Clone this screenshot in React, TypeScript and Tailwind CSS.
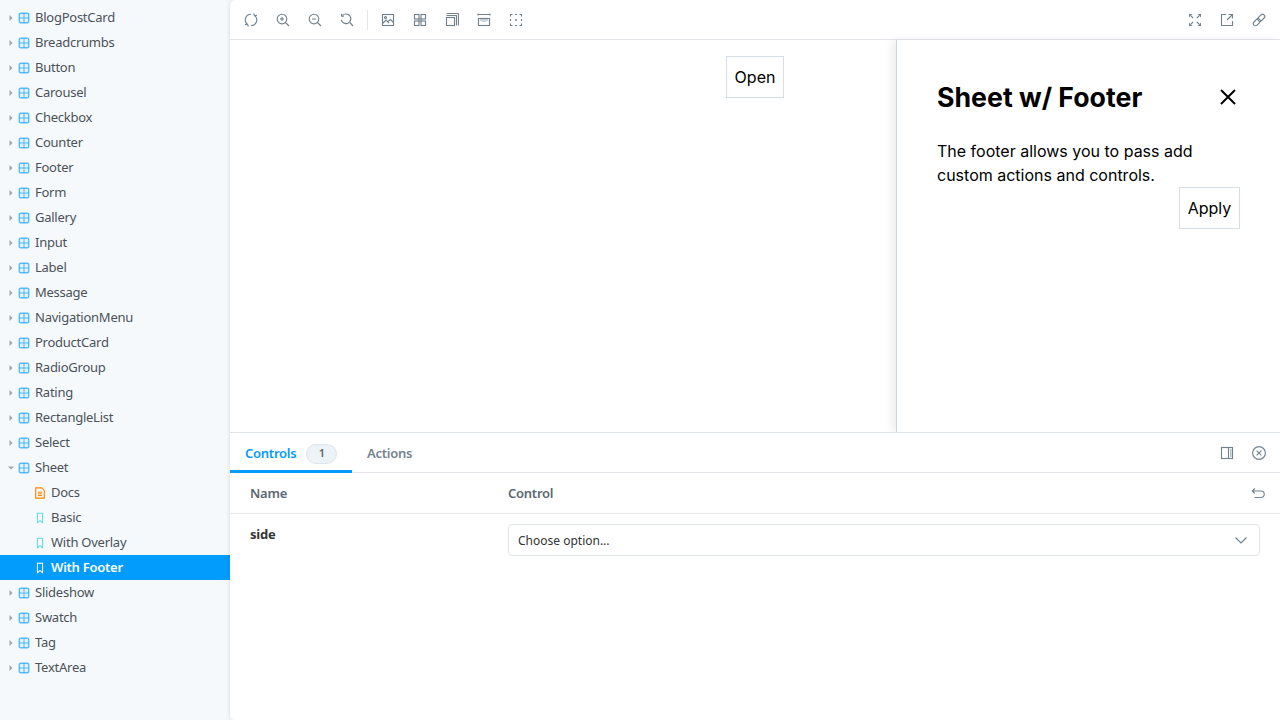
import type { ReactNode } from "react";

const SANS = "font-['Noto_Sans','Open_Sans',sans-serif] tracking-[-0.25px]";

const before = [
  "BlogPostCard", "Breadcrumbs", "Button", "Carousel", "Checkbox", "Counter", "Footer", "Form", "Gallery", "Input",
  "Label", "Message", "NavigationMenu", "ProductCard", "RadioGroup", "Rating", "RectangleList", "Select",
];
const after = ["Slideshow", "Swatch", "Tag", "TextArea"];

function Icon({ children, className = "text-[#73828c]", size = 14 }: { children: ReactNode; className?: string; size?: number }) {
  return (
    <svg width={size} height={size} viewBox="0 0 14 14" fill="none" stroke="currentColor" strokeWidth="1.15" className={`shrink-0 ${className}`}>
      {children}
    </svg>
  );
}

function ComponentIcon() {
  return (
    <Icon size={12} className="text-[#029cfd]">
      <rect x="1.5" y="1.5" width="11" height="11" rx="1.5" strokeWidth="1.6" fill="currentColor" fillOpacity="0.12" opacity="0.65" />
      <path d="M7 1.5v11M1.5 7h11" strokeWidth="1.2" opacity="0.65" />
    </Icon>
  );
}

function Caret({ open }: { open?: boolean }) {
  return (
    <svg width="6" height="6" viewBox="0 0 6 6" className="shrink-0 text-[#9aa5ad]" fill="currentColor">
      {open ? <path d="M0 1.5h6L3 4.5z" /> : <path d="M1.5 0l3 3-3 3z" />}
    </svg>
  );
}

function ComponentRow({ name, open }: { name: string; open?: boolean }) {
  return (
    <div className="flex h-[25px] items-center pl-[8px] text-[13px] text-[#4b5259]">
      <Caret open={open} />
      <span className="ml-[4px]"><ComponentIcon /></span>
      <span className="ml-[5px]">{name}</span>
    </div>
  );
}

function StoryRow({ name, active }: { name: string; active?: boolean }) {
  return (
    <div className={`flex h-[25px] items-center pl-[34px] text-[13px] ${active ? "bg-[#029cfd] font-semibold text-white" : "text-[#4b5259]"}`}>
      <Icon size={12} className={active ? "text-white" : "text-[#5fdcdc]"}>
        <path d="M4 1.5h6v11L7 10l-3 2.5z" strokeWidth="1.2" />
      </Icon>
      <span className="ml-[5px]">{name}</span>
    </div>
  );
}

function ToolButton({ children }: { children: ReactNode }) {
  return <div className="flex h-[40px] w-[32px] items-center justify-center">{children}</div>;
}

function Toolbar() {
  return (
    <div className="flex h-[40px] shrink-0 items-center justify-between border-b border-[#e3e7eb] pl-[5px] pr-[5px]">
      <div className="flex items-center">
        <ToolButton>
          <Icon>
            <path d="M7 1.3A5.7 5.7 0 0 0 3.6 11.6M7 12.7A5.7 5.7 0 0 0 10.4 2.4" />
            <path d="M9.7 0.3l.7 2.4 2.5-.3M4.3 13.7l-.7-2.4-2.5.3" />
          </Icon>
        </ToolButton>
        <ToolButton>
          <Icon>
            <circle cx="6" cy="6" r="4.8" />
            <path d="M9.5 9.5L13 13M6 4v4M4 6h4" />
          </Icon>
        </ToolButton>
        <ToolButton>
          <Icon>
            <circle cx="6" cy="6" r="4.8" />
            <path d="M9.5 9.5L13 13M4 6h4" />
          </Icon>
        </ToolButton>
        <ToolButton>
          <Icon>
            <path d="M2.4 2.6A4.8 4.8 0 1 1 1.3 6.8" />
            <path d="M9.8 9.5L13 13M1.6 0.8v2.4H4" />
          </Icon>
        </ToolButton>
        <div className="mx-[4px] h-[20px] w-px bg-[#e3e7eb]" />
        <ToolButton>
          <Icon>
            <rect x="1.5" y="1.5" width="11" height="11" />
            <path d="M1.5 10.5L5 7l3 3M7 8.5L9.5 6.5l3 3" />
            <circle cx="4.5" cy="4.5" r="1" />
          </Icon>
        </ToolButton>
        <ToolButton>
          <Icon>
            <rect x="1.5" y="1.5" width="4.5" height="4.5" />
            <rect x="8" y="1.5" width="4.5" height="4.5" />
            <rect x="1.5" y="8" width="4.5" height="4.5" />
            <rect x="8" y="8" width="4.5" height="4.5" />
            <rect x="5" y="5" width="4" height="4" fill="currentColor" stroke="none" opacity="0.55" />
          </Icon>
        </ToolButton>
        <ToolButton>
          <Icon>
            <rect x="1.5" y="4.5" width="8" height="8" />
            <path d="M1.5 2.5h10v10M1.5 0.5h12v12" />
          </Icon>
        </ToolButton>
        <ToolButton>
          <Icon>
            <path d="M1 1.5h12M1 0.5v2M13 0.5v2" />
            <rect x="1.5" y="5.5" width="11" height="7" />
            <path d="M4 6v2M6 6v3M8 6v3M10 6v2" opacity="0.6" />
          </Icon>
        </ToolButton>
        <ToolButton>
          <Icon>
            <path d="M1.5 3.5v-2h2M6 1.5h2M10.5 1.5h2v2M12.5 6v2M12.5 10.5v2h-2M8 12.5H6M3.5 12.5h-2v-2M1.5 8V6" />
            <circle cx="7" cy="7" r="1" fill="currentColor" stroke="none" />
          </Icon>
        </ToolButton>
      </div>
      <div className="flex items-center">
        <ToolButton>
          <Icon>
            <path d="M1 1h3.4L1 4.4zM13 1H9.6L13 4.4zM1 13h3.4L1 9.6zM13 13H9.6L13 9.6z" fill="currentColor" stroke="none" />
            <path d="M3 3l2.2 2.2M11 3L8.8 5.2M3 11l2.2-2.2M11 11L8.8 8.8" />
          </Icon>
        </ToolButton>
        <ToolButton>
          <Icon>
            <path d="M6 1.5H1.5v11h11V8M7 7l5.5-5.5M8.5 1.5h4v4" />
          </Icon>
        </ToolButton>
        <ToolButton>
          <Icon>
            <g transform="rotate(-45 7 7)">
              <rect x="-0.2" y="4.8" width="8" height="4.4" rx="2.2" />
              <rect x="6.2" y="4.8" width="8" height="4.4" rx="2.2" />
            </g>
          </Icon>
        </ToolButton>
      </div>
    </div>
  );
}

function Preview() {
  return (
    <div className="relative flex-1 bg-white font-['Inter',sans-serif] tracking-normal text-black">
      <div className="flex justify-center pt-[16px]">
        <button className="h-[42px] border border-[#d5dde5] bg-white px-[8px] text-[16px] leading-[24px]">Open</button>
      </div>
      {/* sheet sits over the story canvas */}
      <div className="absolute inset-y-0 right-0 w-[384px] border-l border-[#c9d6e2] bg-white p-[40px] shadow-[-4px_0_8px_rgba(0,0,0,0.07)]">
        <div className="flex h-[34px] items-center justify-between">
          <h2 className="text-[26.7px] font-bold leading-[34px]">Sheet w/ Footer</h2>
          <svg width="24" height="24" viewBox="0 0 24 24" fill="none" stroke="currentColor" strokeWidth="2">
            <path d="M5 5l14 14M19 5L5 19" />
          </svg>
        </div>
        <p className="mt-[25px] text-[16px] leading-[24px]">The footer allows you to pass add custom actions and controls.</p>
        <div className="flex justify-end">
          <button className="h-[42px] w-[61px] border border-[#d5dde5] bg-white text-[16px] leading-[24px]">Apply</button>
        </div>
      </div>
    </div>
  );
}

function Panel() {
  return (
    <div className={`relative flex h-[288px] shrink-0 flex-col border-t border-[#dfe4e9] bg-white ${SANS}`}>
      <div className="flex h-[40px] shrink-0 items-stretch justify-between border-b border-[#e3e7eb]">
        <div className="flex items-stretch text-[13px] font-semibold">
          <div className="-mb-px flex w-[122px] items-center border-b-[3px] border-[#029cfd] pl-[15px] pt-[4px] text-[#029cfd]">
            Controls
            <span className="ml-[10px] flex h-[20px] w-[31px] items-center justify-center rounded-full border border-[#dfe5ea] bg-[#eef3f7] text-[11px] text-[#5c6870]">1</span>
          </div>
          <div className="flex items-center pl-[15px] pt-[3px] text-[#73828c]">Actions</div>
        </div>
        <div className="flex items-center pr-[5px]">
          <ToolButton>
            <Icon>
              <rect x="1.5" y="1.5" width="11" height="11" />
              <path d="M8.5 1.5v11M10 4h1.5M10 6h1.5M10 8h1.5M10 10h1.5" />
            </Icon>
          </ToolButton>
          <ToolButton>
            <Icon>
              <circle cx="7" cy="7" r="6.4" />
              <path d="M4.6 4.6l4.8 4.8M9.4 4.6l-4.8 4.8" />
            </Icon>
          </ToolButton>
        </div>
      </div>
      <div className="flex h-[41px] shrink-0 items-center border-b border-[#e3e7eb] pl-[20px] pr-[15px] pt-[1px] text-[13px] font-semibold text-[#5c6870]">
        <div className="w-[258px]">Name</div>
        <div className="flex-1">Control</div>
        <Icon>
          <path d="M1.5 4h8.5a2.5 2.5 0 0 1 0 6.5H3.5M3.8 1.5L1.3 4l2.5 2.5" />
        </Icon>
      </div>
      <div className="flex items-start pl-[20px] pr-[20px] pt-[10px] text-[13px]">
        <div className="w-[258px] pt-[1px] font-bold text-[#333]">side</div>
        <div className="flex h-[32px] flex-1 items-center justify-between rounded-[4px] border border-[#dfe4e9] pl-[9px] pr-[11px] text-[12px] tracking-normal text-[#333]">
          <span className="pt-[1px]">Choose option...</span>
          <Icon className="text-[#73828c]">
            <path d="M1.5 4.5L7 10l5.5-5.5" />
          </Icon>
        </div>
      </div>
    </div>
  );
}

export default function App() {
  return (
    <div className={`flex h-[720px] w-[1280px] overflow-hidden bg-[#f6f9fc] ${SANS}`}>
      <aside className="w-[230px] shrink-0 pt-[5px]">
        {before.map((name) => (
          <ComponentRow key={name} name={name} />
        ))}
        <ComponentRow name="Sheet" open />
        <div className="flex h-[25px] items-center pl-[34px] text-[13px] text-[#4b5259]">
          <Icon size={12} className="text-[#ff8300]">
            <path d="M2 1h7l3 3v9H2z" strokeWidth="1.3" />
            <path d="M4.5 6h5M4.5 8h5M4.5 10h5" />
          </Icon>
          <span className="ml-[5px]">Docs</span>
        </div>
        <StoryRow name="Basic" />
        <StoryRow name="With Overlay" />
        <StoryRow name="With Footer" active />
        {after.map((name) => (
          <ComponentRow key={name} name={name} />
        ))}
      </aside>
      <main className="flex flex-1 flex-col overflow-hidden rounded-l-[5px] bg-white shadow-[0_0_5px_rgba(0,0,0,0.12)]">
        <Toolbar />
        <Preview />
        <Panel />
      </main>
    </div>
  );
}
